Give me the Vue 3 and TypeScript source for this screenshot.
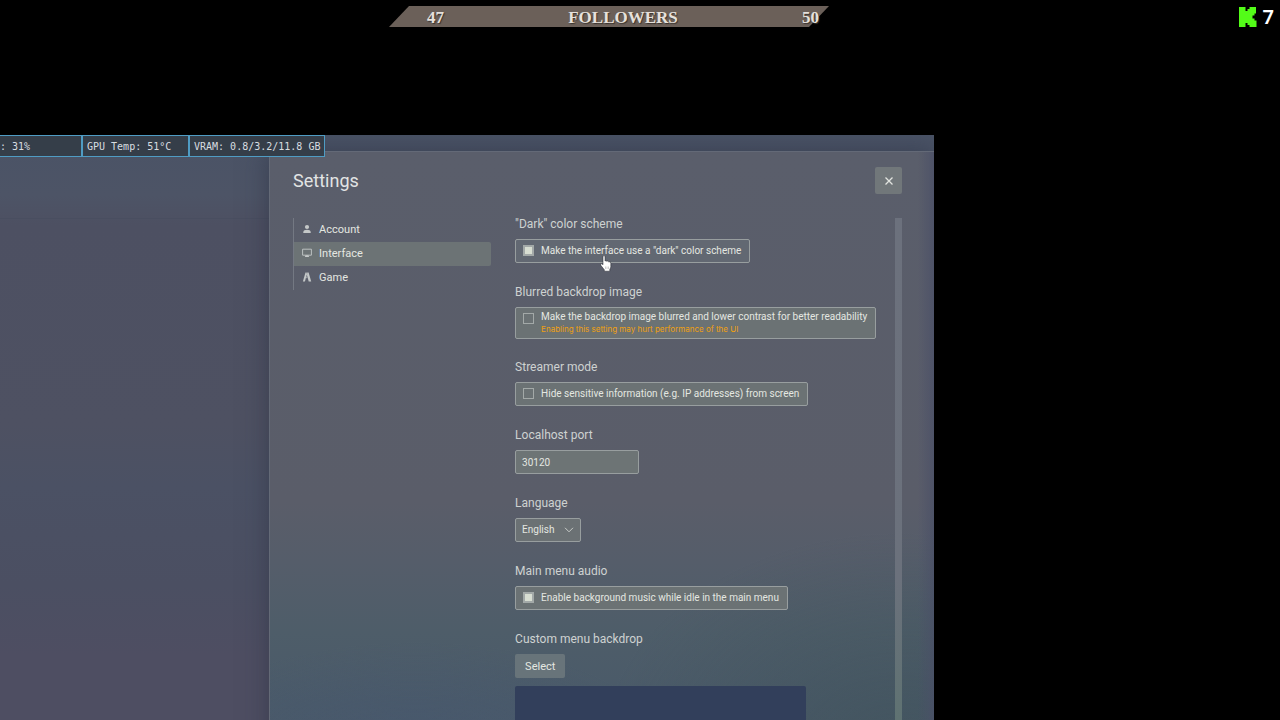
<script setup lang="ts">
import { ref } from 'vue'

interface NavItem {
  id: string
  label: string
}

const navItems: NavItem[] = [
  { id: 'account', label: 'Account' },
  { id: 'interface', label: 'Interface' },
  { id: 'game', label: 'Game' },
]
const stats: string[] = [': 31%', 'GPU Temp: 51°C', 'VRAM: 0.8/3.2/11.8 GB']

const activeTab = ref('interface')
const darkScheme = ref(true)
const blurredBackdrop = ref(false)
const streamerMode = ref(false)
const localhostPort = ref('30120')
const language = ref('en')
const menuAudio = ref(true)
</script>

<template>
  <div class="stage">
    <header class="overlay">
      <div class="goal">
        <span>47</span>
        <span>FOLLOWERS</span>
        <span>50</span>
      </div>
      <div class="viewers">
        <svg class="kick" viewBox="0 0 18 20" aria-hidden="true">
          <path d="M0 0H6.500V4H8.500V2H10.500V0H17V6.500H15.500V8.500H13.500V11.500H15.500V13.500H17.500V20H10.500V18H8.500V16H6.500V20H0Z" fill="#53fc18" />
        </svg>
        <span>7</span>
      </div>
    </header>

    <main class="capture">
      <div class="stats">
        <div v-for="s in stats" :key="s" class="stat">{{ s }}</div>
      </div>

      <div class="behind"></div>

      <section class="dialog" aria-labelledby="settings-title">
        <div class="dialog-head">
          <h1 id="settings-title">Settings</h1>
          <button class="close" type="button" aria-label="Close">
            <svg viewBox="0 0 10 10" aria-hidden="true">
              <path d="M1.500 1.500L8.500 8.500M8.500 1.500L1.500 8.500" fill="none" stroke="#e2e5e0" stroke-width="1.300" />
            </svg>
          </button>
        </div>

        <div class="dialog-body">
          <nav>
            <button
              v-for="item in navItems"
              :key="item.id"
              type="button"
              class="nav-item"
              :class="{ active: item.id === activeTab }"
              @click="activeTab = item.id"
            >
              <svg v-if="item.id === 'account'" viewBox="0 0 10 10" aria-hidden="true">
                <circle cx="5" cy="3" r="2.1" />
                <path d="M1.3 9V8C1.3 6.5 3 5.8 5 5.8S8.700 6.500 8.700 8V9Z" />
              </svg>
              <svg v-else-if="item.id === 'interface'" viewBox="0 0 10 10" aria-hidden="true">
                <path d="M0.600 1.200H9.400V7.200H0.600Z" fill="none" stroke="currentColor" stroke-width="0.900" />
                <path d="M3.600 7.200H6.400L7.200 9.100H2.800Z" />
              </svg>
              <svg v-else viewBox="0 0 10 10" aria-hidden="true">
                <path d="M3.500 0.500H4.700L4.900 2.300L2.900 9.600H0.900Z" />
                <path d="M5.200 0.500H6.600L9.200 9.600H6.700L5.100 3.400Z" />
                <path d="M4.500 4.900L5 3.900L5.400 5.400L4.100 6.500Z" />
              </svg>
              <span>{{ item.label }}</span>
            </button>
          </nav>

          <div class="settings">
            <div class="group">
              <h2>"Dark" color scheme</h2>
              <label class="option plain">
                <input v-model="darkScheme" type="checkbox" />
                <span>Make the interface use a "dark" color scheme</span>
                <svg class="pointer" viewBox="0 0 12 17" aria-hidden="true">
                  <path
                    d="M3 1.700Q3 0.600 4 0.600T5 1.700V6Q6 5.200 6.800 6.300Q7.900 5.600 8.600 6.800Q10.800 6.300 10.800 8.200V11.500Q10.800 13 9.800 14.200V16.200H4.300V14.700L1 10.600Q0.200 9.300 1.200 8.800Q2 8.500 3 9.800Z"
                    fill="#fff"
                    stroke="#22242c"
                    stroke-width="0.500"
                  />
                  <path d="M5.500 11.500V14M7 11.500V14M8.500 11.500V14" stroke="#888" stroke-width="0.400" />
                </svg>
              </label>
            </div>

            <div class="group">
              <h2>Blurred backdrop image</h2>
              <label class="option tall">
                <input v-model="blurredBackdrop" type="checkbox" />
                <span>
                  Make the backdrop image blurred and lower contrast for better readability
                  <em>Enabling this setting may hurt performance of the UI</em>
                </span>
              </label>
            </div>

            <div class="group">
              <h2>Streamer mode</h2>
              <label class="option">
                <input v-model="streamerMode" type="checkbox" />
                <span>Hide sensitive information (e.g. IP addresses) from screen</span>
              </label>
            </div>

            <div class="group">
              <h2><label for="port">Localhost port</label></h2>
              <input id="port" v-model="localhostPort" class="text-input" type="text" />
            </div>

            <div class="group">
              <h2><label for="language">Language</label></h2>
              <div class="select-wrap">
                <select id="language" v-model="language">
                  <option value="en">English</option>
                </select>
                <svg viewBox="0 0 10 6" aria-hidden="true">
                  <path d="M1 0.800L5 4.800L9 0.800" fill="none" stroke="#c8ccc8" stroke-width="1" />
                </svg>
              </div>
            </div>

            <div class="group">
              <h2>Main menu audio</h2>
              <label class="option">
                <input v-model="menuAudio" type="checkbox" />
                <span>Enable background music while idle in the main menu</span>
              </label>
            </div>

            <div class="group">
              <h2>Custom menu backdrop</h2>
              <button class="select-btn" type="button">Select</button>
              <div class="preview"></div>
            </div>
          </div>

          <div class="scrollbar"></div>
        </div>
      </section>
    </main>
  </div>
</template>

<style>
body {
  margin: 0;
  background: #000;
}
</style>

<style scoped>
.stage {
  display: flex;
  flex-direction: column;
  height: 100vh;
  overflow: hidden;
  background: #000;
  font-family: Roboto, 'Liberation Sans', sans-serif;
  font-size: 10px;
  color: #e4e7e1;
}
.stage * {
  box-sizing: border-box;
}
button,
input,
select {
  font: inherit;
  color: inherit;
}

.overlay {
  display: grid;
  grid-template-columns: 389fr 440fr 451fr;
  align-items: start;
  flex: none;
  height: 135px;
  padding-top: 6px;
}
.goal {
  position: relative;
  z-index: 0;
  grid-column: 2;
  display: flex;
  justify-content: space-between;
  align-items: center;
  height: 21px;
  padding: 2px 10px 0 38px;
  font: bold 17px/19px 'Liberation Serif', serif;
  color: #e6e1dc;
  text-shadow: 1px 1px 1px #3a332e;
}
.goal::before {
  content: '';
  position: absolute;
  inset: 0;
  z-index: -1;
  background: #6b6059;
  clip-path: polygon(20px 0, 100% 0, calc(100% - 20px) 100%, 0 100%);
}
.viewers {
  display: flex;
  justify-content: flex-end;
  align-items: center;
  gap: 6px;
  height: 21px;
  padding-right: 6px;
  font: 600 20px/21px 'Noto Sans', sans-serif;
  color: #fff;
}
.kick {
  width: 18px;
  height: 20px;
}

.capture {
  position: relative;
  flex: 1;
  min-height: 0;
  display: grid;
  grid-template-columns: 269fr 665fr;
  width: 73%;
  padding-top: 16px;
  overflow: hidden;
  background: linear-gradient(180deg, #4a5366 0, #4d5466 60px, #4d5062 90px, #4e5162 290px, #4b5164 350px, #4b4f62 450px, #4e4e62 520px, #4e4e62 100%);
}
.behind {
  height: 68px;
  border-bottom: 1px solid #494e60;
}
.stats {
  position: absolute;
  top: 0;
  left: 0;
  z-index: 2;
  display: flex;
  font: 10px/21px 'DejaVu Sans Mono', 'Liberation Mono', monospace;
  color: #d8dde0;
}
.stat {
  height: 22px;
  width: 107px;
  padding-left: 4px;
  border: 1px solid #4f9cc4;
  background: #353e49;
  white-space: pre;
}
.stat:first-child {
  width: 82px;
  padding-left: 0;
  border-left: 0;
}
.stat:last-child {
  width: 136px;
}

.dialog {
  display: flex;
  flex-direction: column;
  padding: 15px 32px 0 23px;
  min-width: 0;
  border-top: 1px solid #636977;
  border-left: 1px solid #646a77;
  margin-bottom: -200px;
  background:
    linear-gradient(to left, #4a4f67c0, #4a4f6700 16px),
    radial-gradient(ellipse 250px 110px at 22% 600px, #45567180, #45567100),
    radial-gradient(ellipse 300px 220px at 95% 600px, #3e515890, #3e515800),
    linear-gradient(180deg, #5a5e6b 0, #5a5d69 350px, #555d6a 410px, #4e5d69 480px, #4a5a69 550px, #485767 100%);
  box-shadow: 0 0 24px #232a3c80;
}
.dialog-head {
  display: flex;
  justify-content: space-between;
  align-items: center;
  height: 27px;
  margin-bottom: 24px;
}
h1 {
  margin: 0;
  font-size: 18px;
  font-weight: 400;
  line-height: 26px;
  color: #e2e4e4;
}
.close {
  display: grid;
  place-items: center;
  width: 27px;
  height: 27px;
  padding: 0;
  border: 0;
  border-radius: 2px;
  background: #71777a;
}
.close svg {
  width: 10px;
  height: 10px;
}
.dialog-body {
  display: grid;
  grid-template-columns: 198px 1fr 7px;
  flex: 1;
}
nav {
  align-self: start;
  border-left: 1px solid #747983;
}
.nav-item {
  display: flex;
  align-items: center;
  gap: 7px;
  width: 100%;
  height: 24px;
  padding: 0 8px 2px;
  border: 0;
  border-radius: 0 2px 2px 0;
  background: none;
  font-size: 11px;
  text-align: left;
}
.nav-item.active {
  background: #6c7375;
}
.nav-item svg {
  width: 10px;
  height: 10px;
  fill: #c4c8c8;
  color: #c4c8c8;
}

.settings {
  display: flex;
  flex-direction: column;
  gap: 23px;
  padding-left: 24px;
}
.group {
  display: flex;
  flex-direction: column;
  align-items: flex-start;
  gap: 8px;
}
h2 {
  margin: 0;
  font-size: 12px;
  font-weight: 400;
  line-height: 13px;
  color: #ced2d1;
}
.option {
  position: relative;
  display: flex;
  align-items: center;
  gap: 7px;
  height: 24px;
  padding: 0 8px 1px 7px;
  border: 1px solid #989e9f;
  border-radius: 2px;
  background: #6b7274;
  line-height: 12px;
  white-space: nowrap;
}
.option.plain {
  background: #626872;
}
.option.tall {
  height: 32px;
  margin-bottom: -1px;
}
.option.tall input {
  margin-bottom: 8px;
}
.option em {
  display: block;
  font-family: Inter, Roboto, sans-serif;
  font-size: 8px;
  font-style: normal;
  line-height: 12px;
  color: #efa010;
}
.option input {
  display: grid;
  place-items: center;
  appearance: none;
  width: 11px;
  height: 11px;
  margin: 0;
  border: 1px solid #a3a9a8;
}
.option input:checked::before {
  content: '';
  width: 7px;
  height: 7px;
  background: #d8ded2;
}
.option input:checked {
  background: #a3a9a8;
}
.pointer {
  position: absolute;
  top: 15px;
  left: 84px;
  width: 12px;
  height: 17px;
}
.text-input {
  width: 124px;
  height: 24px;
  padding: 0 6px;
  border: 1px solid #989e9f;
  border-radius: 2px;
  background: #6d7475;
}
.select-wrap {
  display: grid;
  align-items: center;
}
.select-wrap > * {
  grid-area: 1 / 1;
}
.select-wrap select {
  appearance: none;
  width: 66px;
  height: 24px;
  padding: 0 6px 1px;
  border: 1px solid #989e9f;
  border-radius: 2px;
  background: #6b7174;
}
.select-wrap svg {
  justify-self: end;
  width: 10px;
  height: 6px;
  margin-right: 7px;
  pointer-events: none;
}
.select-btn {
  height: 24px;
  padding: 0 10px;
  border: 0;
  border-radius: 2px;
  background: #68747a;
  font-size: 11px;
}
.preview {
  width: 291px;
  height: 164px;
  border-radius: 2px;
  background: #323f5b;
}
.scrollbar {
  background: linear-gradient(180deg, #6c717d 0, #6b717c 360px, #5f7272 500px);
}
</style>
